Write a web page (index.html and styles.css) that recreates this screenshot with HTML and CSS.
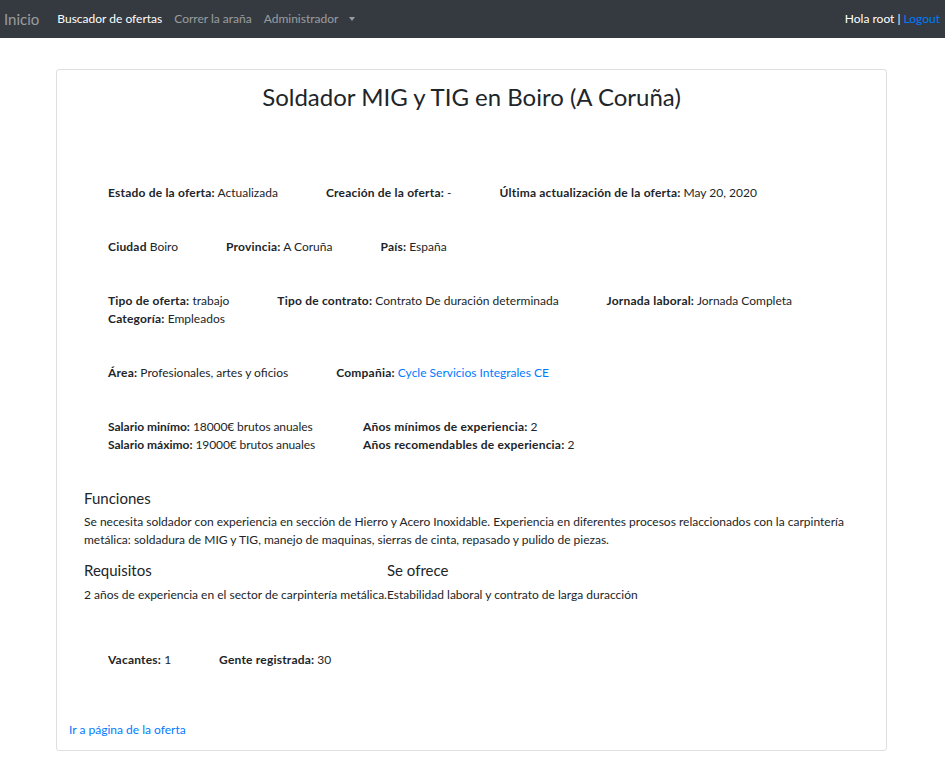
FILE: index.html
```html
<!DOCTYPE html>
<html lang="es">
<head>
<meta charset="utf-8">
<title>Oferta</title>
<link rel="stylesheet" href="styles.css">
</head>
<body>
<nav class="navbar">
  <a class="brand" href="#">Inicio</a>
  <a class="nav-link active" href="#">Buscador de ofertas</a>
  <a class="nav-link" href="#">Correr la araña</a>
  <a class="nav-link dropdown" href="#">Administrador<span class="caret"></span></a>
  <div class="user">Hola root | <a href="#" class="logout">Logout</a></div>
</nav>

<div class="container">
  <div class="card">
    <h2 class="title">Soldador MIG y TIG en Boiro (A Coruña)</h2>

    <div class="fields">
      <div class="field-row first">
        <div class="field"><strong>Estado de la oferta:</strong> Actualizada</div>
        <div class="field"><strong>Creación de la oferta:</strong> -</div>
        <div class="field"><strong>Última actualización de la oferta:</strong> May 20, 2020</div>
      </div>
      <div class="field-row">
        <div class="field"><strong>Ciudad</strong> Boiro</div>
        <div class="field"><strong>Provincia:</strong> A Coruña</div>
        <div class="field"><strong>País:</strong> España</div>
      </div>
      <div class="field-row">
        <div class="field"><strong>Tipo de oferta:</strong> trabajo</div>
        <div class="field"><strong>Tipo de contrato:</strong> Contrato De duración determinada</div>
        <div class="field"><strong>Jornada laboral:</strong> Jornada Completa</div>
        <div class="field"><strong>Categoría:</strong> Empleados</div>
      </div>
      <div class="field-row">
        <div class="field"><strong>Área:</strong> Profesionales, artes y oficios</div>
        <div class="field"><strong>Compañia:</strong> <a href="#" class="link">Cycle Servicios Integrales CE</a></div>
      </div>
      <div class="field-row">
        <div class="field narrow">
          <div><strong>Salario minímo:</strong> 18000€ brutos anuales</div>
          <div><strong>Salario máximo:</strong> 19000€ brutos anuales</div>
        </div>
        <div class="field">
          <div><strong>Años mínimos de experiencia:</strong> 2</div>
          <div><strong>Años recomendables de experiencia:</strong> 2</div>
        </div>
      </div>
    </div>

    <div class="section">
      <h5 class="section-title">Funciones</h5>
      <p class="section-text">Se necesita soldador con experiencia en sección de Hierro y Acero Inoxidable. Experiencia en diferentes procesos relaccionados con la carpintería metálica: soldadura de MIG y TIG, manejo de maquinas, sierras de cinta, repasado y pulido de piezas.</p>
      <div class="pair">
        <div class="pair-col">
          <h5 class="section-title">Requisitos</h5>
          <p class="section-text">2 años de experiencia en el sector de carpintería metálica.</p>
        </div>
        <div class="pair-col">
          <h5 class="section-title">Se ofrece</h5>
          <p class="section-text">Estabilidad laboral y contrato de larga duracción</p>
        </div>
      </div>
    </div>

    <div class="fields">
      <div class="field-row vac">
        <div class="field"><strong>Vacantes:</strong> 1</div>
        <div class="field"><strong>Gente registrada:</strong> 30</div>
      </div>
    </div>

    <a href="#" class="link offer-link">Ir a página de la oferta</a>
  </div>
</div>
</body>
</html>
```
FILE: styles.css
```css
* { box-sizing: border-box; }

body {
  margin: 0;
  background: #fff;
  color: #212529;
  font-family: Lato, "Noto Sans", sans-serif;
  font-size: 12px;
  line-height: 18px;
}

a { text-decoration: none; }

.navbar {
  height: 38px;
  background: #343a40;
  display: flex;
  align-items: center;
  padding: 0 5px 0 4px;
}

.brand {
  font-size: 15px;
  color: rgba(255, 255, 255, 0.5);
  margin-right: 12px;
}

.nav-link {
  color: rgba(255, 255, 255, 0.5);
  padding: 0 6px;
}

.nav-link.active { color: #fff; }

.caret {
  display: inline-block;
  width: 0;
  height: 0;
  margin-left: 11px;
  vertical-align: 2px;
  border-top: 4px solid rgba(255, 255, 255, 0.5);
  border-left: 3.5px solid transparent;
  border-right: 3.5px solid transparent;
}

.user {
  margin-left: auto;
  color: #fff;
}

.logout { color: #007bff; }

.container {
  width: 831px;
  margin: 31px 0 0 56px;
}

.card {
  border: 1px solid rgba(0, 0, 0, 0.125);
  border-radius: 3px;
  padding: 12px 12px 11px;
}

.title {
  margin: 1px 0 0;
  font-size: 24px;
  font-weight: 400;
  line-height: 28px;
  text-align: center;
}

.fields { padding: 0 15px; }

.field-row {
  display: flex;
  flex-wrap: wrap;
  margin-top: 36px;
}

.field-row.first { margin-top: 73px; }
.field-row.vac { margin-top: 47px; }

.field { margin: 0 24px; }

.field.narrow { letter-spacing: -0.1px; }

.field strong {
  font-weight: 700;
  letter-spacing: 0.2px;
}

.field.narrow strong { letter-spacing: 0; }

.link { color: #007bff; }

.section {
  padding: 0 15px;
  margin-top: 35px;
}

.section-title {
  margin: 0 0 6px;
  font-size: 15px;
  font-weight: 400;
  line-height: 18px;
}

.section-text { margin: 0 0 12px; }

.pair { display: flex; }

.pair-col .section-title { margin-bottom: 7px; }

.pair-col .section-text { margin-bottom: 0; }

.offer-link {
  display: inline-block;
  margin-top: 52px;
}
```
